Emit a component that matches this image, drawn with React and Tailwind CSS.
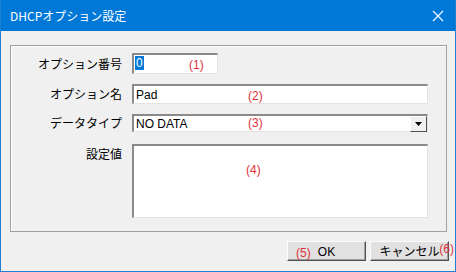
import React from 'react';

const jp = { fontFamily: '"Noto Sans CJK JP", "Liberation Sans", sans-serif' };
const latin = { fontFamily: '"Liberation Sans", "Noto Sans CJK JP", sans-serif' };

function Mark({ children, className }) {
  return (
    <span className={`absolute text-[12px] leading-none text-[#e0303a] ${className}`} style={latin}>
      {children}
    </span>
  );
}

function Sunken({ className, children }) {
  return (
    <div className={`relative bg-white border-t-2 border-l-2 border-t-[#8a8a8a] border-l-[#8a8a8a] border-r border-b border-r-[#e3e3e3] border-b-[#e3e3e3] ${className}`}>
      {children}
    </div>
  );
}

function Label({ children, className = '' }) {
  return (
    <div className={`w-[121px] pr-[10px] text-right text-[12px] text-black ${className}`} style={jp}>
      {children}
    </div>
  );
}

function Btn({ children, className = '' }) {
  return (
    <button className={`relative w-[79px] h-[20px] bg-[#e1e1e1] border border-t-[#fcfcfc] border-l-[#fcfcfc] border-r-[#505050] border-b-[#505050] shadow-[inset_-1px_-1px_0_#a0a0a0] text-[12px] leading-none text-black ${className}`} style={jp}>
      {children}
    </button>
  );
}

export default function App() {
  return (
    <div className="w-[456px] h-[272px] bg-[#f0f0f0] flex flex-col border-x border-b border-[#1f7fd0] overflow-hidden">
      <div className="h-[31px] bg-[#0078d7] flex items-center justify-between pl-[9px] pr-[8px] shrink-0">
        <span className="text-white text-[12px]" style={jp}>DHCPオプション設定</span>
        <svg width="12" height="12" viewBox="0 0 12 12" className="mr-[3px]">
          <path d="M1 1 L11 11 M11 1 L1 11" stroke="white" strokeWidth="1.1" />
        </svg>
      </div>

      <div className="mt-[14px] ml-[9px] mr-[8px] h-[187px] border border-[#a0a0a0] shadow-[inset_1px_1px_0_#ffffff] flex flex-col pt-[7px]">
        <div className="flex items-center">
          <Label>オプション番号</Label>
          <Sunken className="w-[86px] h-[21px] flex items-center pl-[1px]">
            <span className="bg-[#0078d7] text-white text-[12px] leading-[14px] px-[1px] -mt-[2px]" style={latin}>0</span>
            <Mark className="left-[55px] top-[4px]">(1)</Mark>
          </Sunken>
        </div>

        <div className="flex items-center mt-[10px]">
          <Label>オプション名</Label>
          <Sunken className="w-[296px] h-[20px] flex items-center pl-[2px]">
            <span className="text-[12px] text-black" style={latin}>Pad</span>
            <Mark className="left-[114px] top-[4px]">(2)</Mark>
          </Sunken>
        </div>

        <div className="flex items-center mt-[10px]">
          <Label>データタイプ</Label>
          <Sunken className="w-[296px] h-[18px] flex items-center pl-[2px]">
            <span className="text-[12px] text-black" style={latin}>NO DATA</span>
            <Mark className="left-[114px] top-[1px]">(3)</Mark>
            <div className="absolute right-0 top-0 w-[17px] h-[16px] bg-[#f0f0f0] border border-t-[#fcfcfc] border-l-[#fcfcfc] border-r-[#505050] border-b-[#505050] flex items-center justify-center">
              <svg width="7" height="4" viewBox="0 0 7 4">
                <path d="M0 0 H7 L3.5 4 Z" fill="black" />
              </svg>
            </div>
          </Sunken>
        </div>

        <div className="flex items-start mt-[12px]">
          <Label className="pt-[1px]">設定値</Label>
          <Sunken className="w-[296px] h-[74px]">
            <Mark className="left-[112px] top-[18px]">(4)</Mark>
          </Sunken>
        </div>
      </div>

      <div className="flex justify-end gap-[4px] mt-[9px] mr-[6px]">
        <Btn>
          <Mark className="left-[8px] top-[5px]">(5)</Mark>
          <span style={latin}>OK</span>
        </Btn>
        <Btn>
          キャンセル
          <Mark className="right-[-6px] top-[1px]">(6)</Mark>
        </Btn>
      </div>
    </div>
  );
}
